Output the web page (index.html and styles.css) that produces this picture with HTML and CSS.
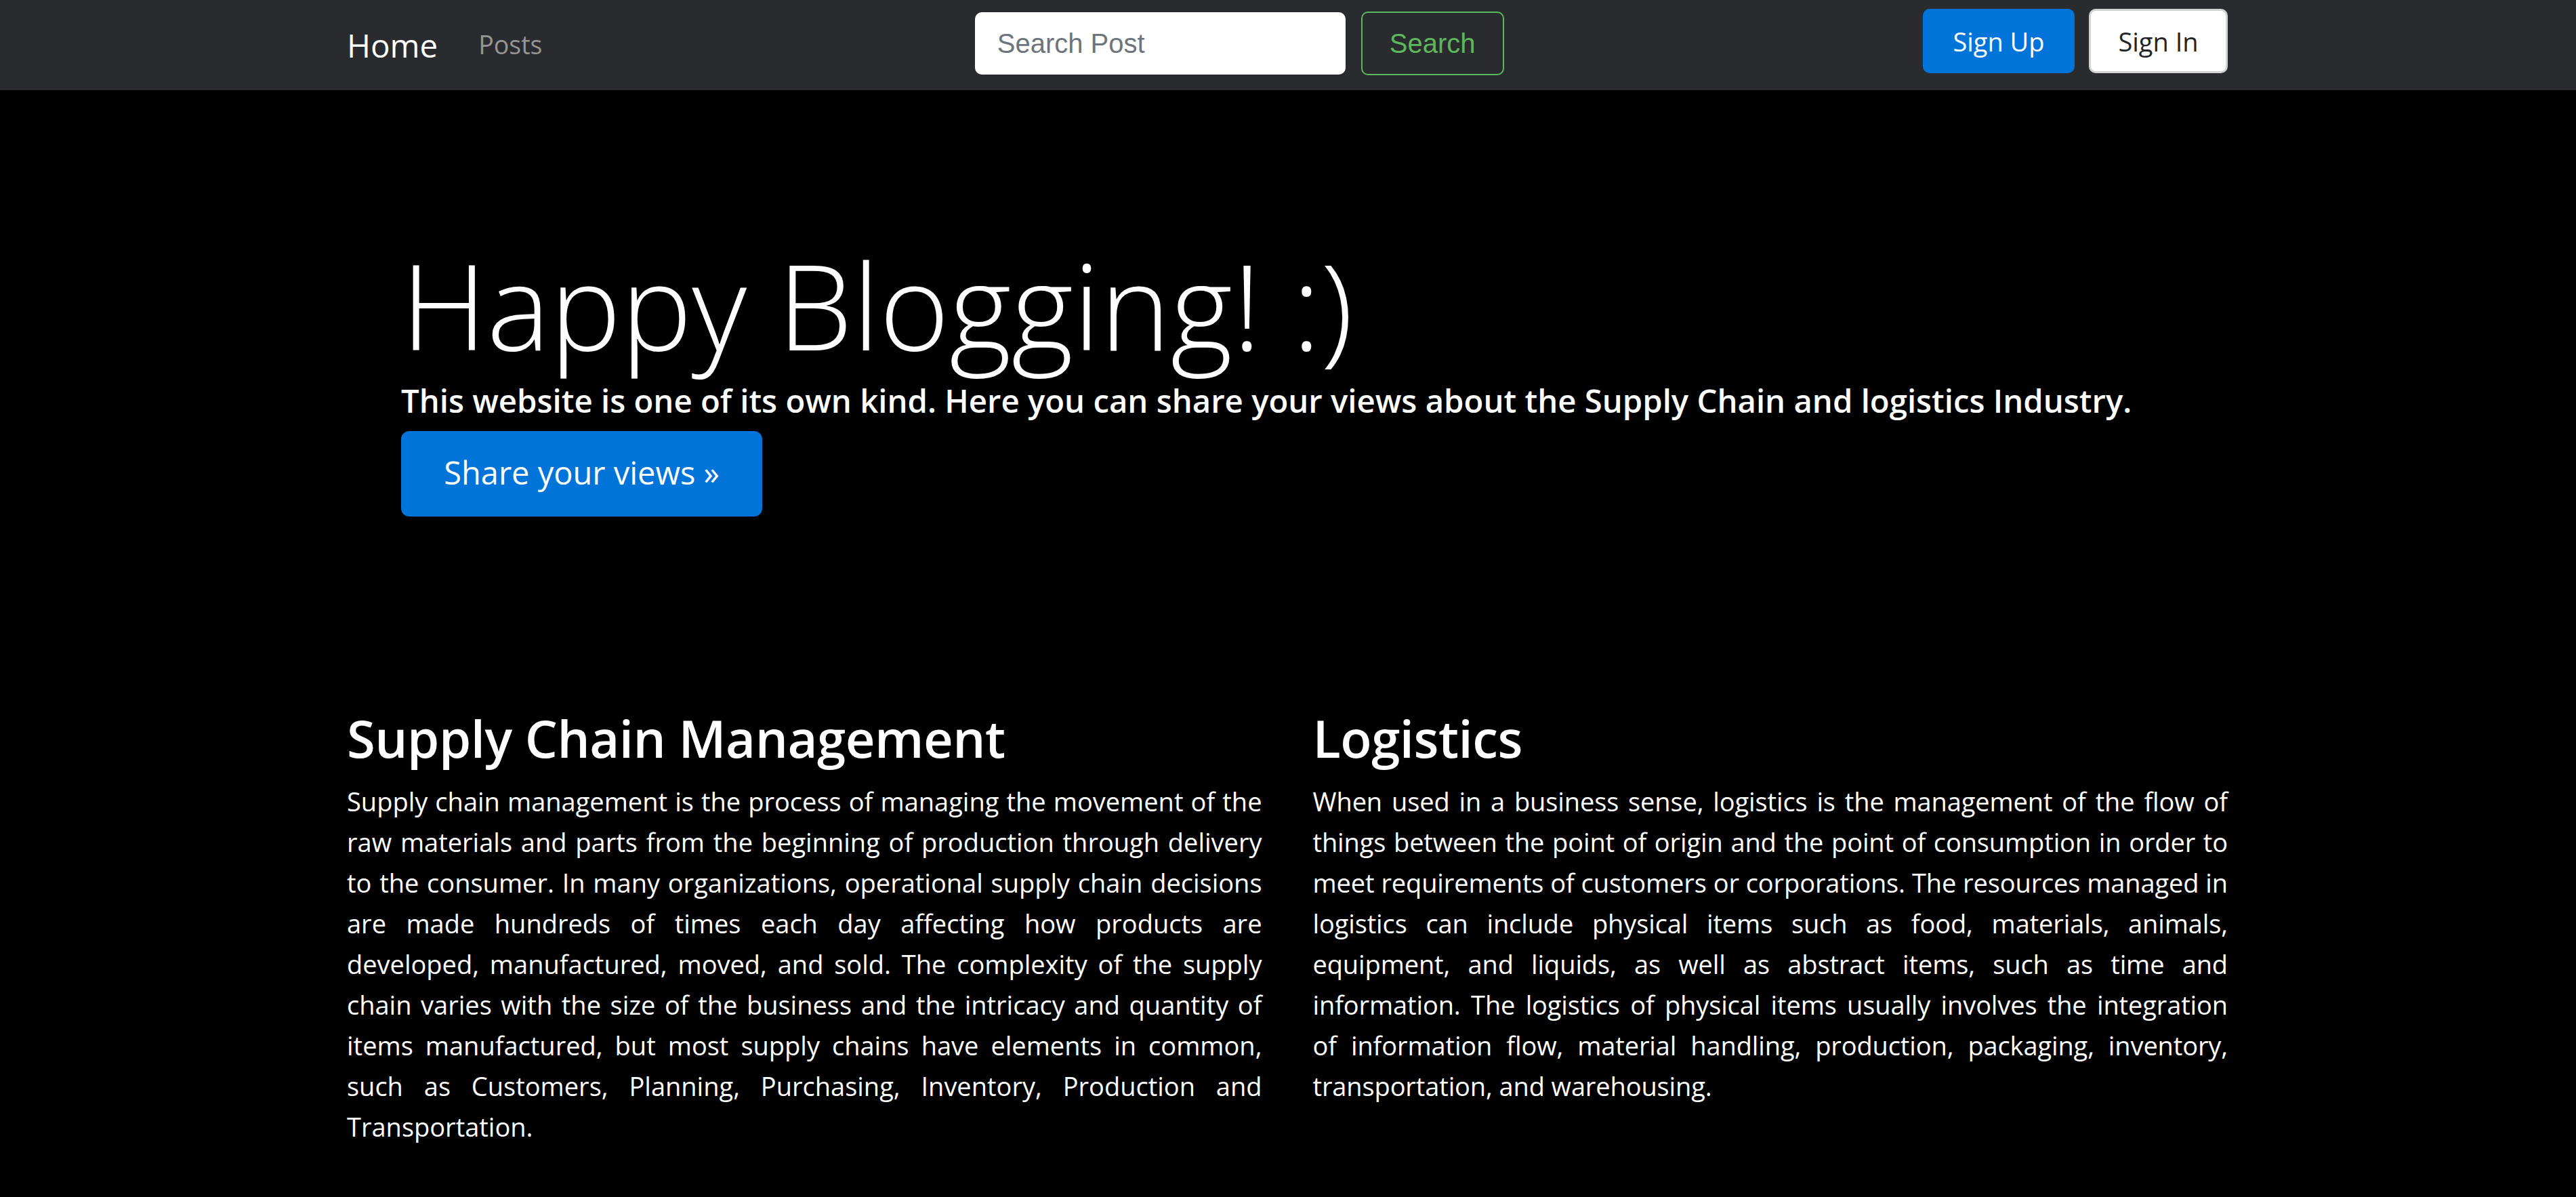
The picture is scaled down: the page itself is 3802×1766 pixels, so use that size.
FILE: index.html
```html
<!DOCTYPE html>
<html lang="en">
<head>
<meta charset="utf-8">
<title>Happy Blogging</title>
<link rel="stylesheet" href="styles.css">
</head>
<body>
<nav class="navbar">
  <div class="container nav-inner">
    <a class="brand" href="#">Home</a>
    <ul class="nav-links">
      <li><a class="nav-link" href="#">Posts</a></li>
    </ul>
    <form class="search">
      <input class="search-input" type="search" placeholder="Search Post">
      <button class="btn-search" type="button">Search</button>
    </form>
    <div class="auth">
      <button class="btn btn-primary" type="button">Sign Up</button>
      <button class="btn btn-light" type="button">Sign In</button>
    </div>
  </div>
</nav>

<main class="container">
  <section class="hero">
    <h1 class="hero-title">Happy Blogging! :)</h1>
    <p class="hero-lead">This website is one of its own kind. Here you can share your views about the Supply Chain and logistics Industry.</p>
    <a class="btn-lg" href="#">Share your views &raquo;</a>
  </section>

  <section class="row">
    <article class="col">
      <h2 class="col-title">Supply Chain Management</h2>
      <p class="col-text">Supply chain management is the process of managing the movement of the raw materials and parts from the beginning of production through delivery to the consumer. In many organizations, operational supply chain decisions are made hundreds of times each day affecting how products are developed, manufactured, moved, and sold. The complexity of the supply chain varies with the size of the business and the intricacy and quantity of items manufactured, but most supply chains have elements in common, such as Customers, Planning, Purchasing, Inventory, Production and Transportation.</p>
    </article>
    <article class="col">
      <h2 class="col-title">Logistics</h2>
      <p class="col-text col-text-tight">When used in a business sense, logistics is the management of the flow of things between the point of origin and the point of consumption in order to meet requirements of customers or corporations. The resources managed in logistics can include physical items such as food, materials, animals, equipment, and liquids, as well as abstract items, such as time and information. The logistics of physical items usually involves the integration of&nbsp;information flow, material handling, production, packaging, inventory, transportation, and warehousing.</p>
    </article>
  </section>
</main>
</body>
</html>
```

FILE: styles.css
```css
* { box-sizing: border-box; }

html, body {
  margin: 0;
  padding: 0;
  background: #000;
  color: #fff;
  font-family: "Open Sans", "Noto Sans", sans-serif;
}

a { text-decoration: none; }

.container {
  width: 2850px;
  margin: 0 auto;
  padding: 0 38px 0 36px;
}

/* NAVBAR */
.navbar {
  background: #2a2b2e;
  height: 133px;
}

.nav-inner {
  display: flex;
  align-items: center;
  height: 100%;
}

.brand {
  color: #fff;
  font-size: 47.5px;
  margin-right: 40px;
  line-height: 1.5;
}

.nav-links {
  list-style: none;
  margin: 0;
  padding: 0;
  display: flex;
}

.nav-link {
  display: block;
  padding: 20px;
  color: #959595;
  font-size: 37.5px;
  line-height: 1.5;
}

.search {
  display: flex;
  margin: 0 auto;
  align-self: flex-start;
  margin-top: 17px;
  gap: 23px;
}

.search-input {
  width: 547px;
  height: 92px;
  border: 2px solid #fff;
  border-radius: 10px;
  background: #fff;
  padding: 0 31px;
  font-family: "Liberation Sans", Arial, sans-serif;
  font-size: 40px;
  color: #495057;
  margin-top: 1px;
}

.search-input::placeholder { color: #6c757d; }

.btn-search {
  width: 211px;
  height: 94px;
  border: 2.5px solid #5cb85c;
  border-radius: 10px;
  background: transparent;
  color: #5cb85c;
  font-family: "Liberation Sans", Arial, sans-serif;
  font-size: 40px;
  padding: 0;
}

.auth {
  display: flex;
  gap: 21px;
  align-self: flex-start;
  margin-top: 13px;
}

.btn {
  height: 95px;
  border-radius: 10px;
  font-family: "Open Sans", "Noto Sans", sans-serif;
  font-size: 38px;
  padding: 0;
}

.btn-primary {
  width: 224px;
  background: #0074d9;
  border: 2.5px solid #0074d9;
  color: #fff;
}

.btn-light {
  width: 205px;
  background: #fff;
  border: 3px solid #d2d2d2;
  color: #212529;
}

/* HERO */
.hero {
  padding: 213px 80px 0;
}

.hero-title {
  margin: 0;
  font-size: 176px;
  font-weight: 300;
  line-height: 207px;
}

.hero-lead {
  margin: 0;
  font-size: 47.3px;
  font-weight: 600;
  line-height: 75px;
}

.btn-lg {
  display: inline-block;
  margin-top: 8px;
  width: 533px;
  height: 126px;
  line-height: 122px;
  text-align: center;
  background: #0074d9;
  border-radius: 12px;
  color: #fff;
  font-size: 47px;
}

/* COLUMNS */
.row {
  display: grid;
  grid-template-columns: 1fr 1fr;
  column-gap: 75px;
  margin-top: 279px;
}

.col-title {
  margin: 0 0 15px;
  font-size: 76px;
  font-weight: 600;
  line-height: 96px;
  letter-spacing: -0.5px;
}

.col-text {
  margin: 0;
  font-size: 38px;
  line-height: 60px;
  text-align: justify;
}

.col-text-tight {
  letter-spacing: -0.12px;
}
```
